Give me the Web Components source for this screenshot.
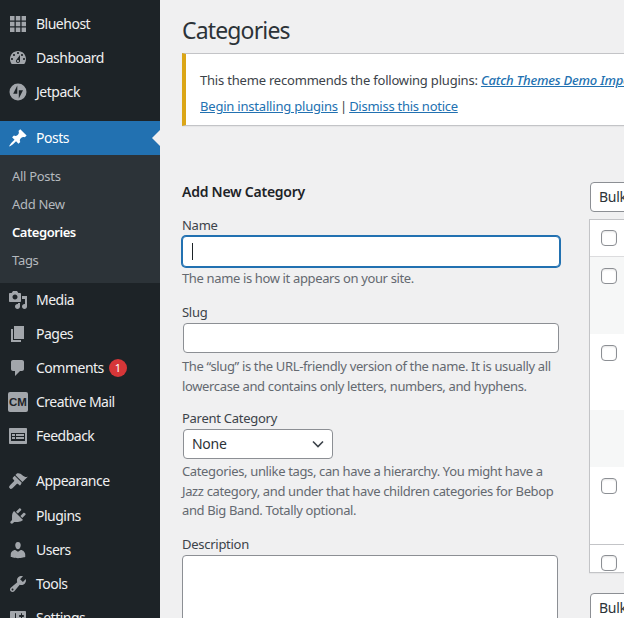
<!DOCTYPE html>
<html lang="en"><head><meta charset="utf-8"><title>Categories</title>
<style>
html,body{margin:0;padding:0;height:618px;overflow:hidden;background:#f0f0f1}
body{font:13px/1.4 "Noto Sans","Open Sans",sans-serif;color:#3c434a}
</style></head><body>
<wp-admin>
  <wp-sidebar slot="side">
    <wp-menu-item icon="bluehost">Bluehost</wp-menu-item>
    <wp-menu-item icon="dashboard">Dashboard</wp-menu-item>
    <wp-menu-item icon="jetpack">Jetpack</wp-menu-item>
    <wp-menu-item icon="post" current style="margin-top:12px">Posts</wp-menu-item>
    <wp-submenu>
      <wp-sub-item>All Posts</wp-sub-item>
      <wp-sub-item>Add New</wp-sub-item>
      <wp-sub-item current>Categories</wp-sub-item>
      <wp-sub-item>Tags</wp-sub-item>
    </wp-submenu>
    <wp-menu-item icon="media">Media</wp-menu-item>
    <wp-menu-item icon="page">Pages</wp-menu-item>
    <wp-menu-item icon="comments" badge="1">Comments</wp-menu-item>
    <wp-menu-item icon="cm">Creative Mail</wp-menu-item>
    <wp-menu-item icon="feedback">Feedback</wp-menu-item>
    <wp-menu-item icon="appearance" style="margin-top:11px">Appearance</wp-menu-item>
    <wp-menu-item icon="plugins" style="margin-top:1px">Plugins</wp-menu-item>
    <wp-menu-item icon="users">Users</wp-menu-item>
    <wp-menu-item icon="tools">Tools</wp-menu-item>
    <wp-menu-item icon="settings">Settings</wp-menu-item>
  </wp-sidebar>
  <wp-page slot="main" heading="Categories">
    <wp-notice>
      <span slot="line1">This theme recommends the following plugins: <a>Catch Themes Demo Import</a></span>
      <span slot="line2"><a class="x">Begin installing plugins</a><span class="sep"> | </span><a class="x d">Dismiss this notice</a></span>
    </wp-notice>
    <wp-columns>
      <wp-form slot="left"></wp-form>
      <wp-list slot="right"></wp-list>
    </wp-columns>
  </wp-page>
</wp-admin>
<script>
const ICONS={
 post:'<path d="M10.44 3.02l1.82-1.82 6.36 6.35-1.83 1.82c-1.05-.68-2.48-.57-3.41.36l-.75.75c-.92.93-1.04 2.35-.35 3.41l-1.83 1.82-2.41-2.41-2.8 2.79c-.42.42-3.38 2.71-3.8 2.29s1.86-3.39 2.28-3.81l2.79-2.79L4.1 9.36l1.83-1.82c1.05.69 2.48.57 3.4-.36l.75-.75c.93-.92 1.05-2.35.36-3.41z"/>',
 dashboard:'<path d="M3.76 16h12.48c1.1-1.37 1.76-3.11 1.76-5 0-4.42-3.58-8-8-8s-8 3.58-8 8c0 1.89.66 3.63 1.76 5zM10 4c.55 0 1 .45 1 1s-.45 1-1 1-1-.45-1-1 .45-1 1-1zM6 6c.55 0 1 .45 1 1s-.45 1-1 1-1-.45-1-1 .45-1 1-1zm8 0c.55 0 1 .45 1 1s-.45 1-1 1-1-.45-1-1 .45-1 1-1zm-5.37 5.55L12 7v6c0 1.1-.9 2-2 2s-2-.9-2-2c0-.57.24-1.08.63-1.45zM4 10c.55 0 1 .45 1 1s-.45 1-1 1-1-.45-1-1 .45-1 1-1zm12 0c.55 0 1 .45 1 1s-.45 1-1 1-1-.45-1-1 .45-1 1-1zm-5 3c0-.55-.45-1-1-1s-1 .45-1 1 .45 1 1 1 1-.45 1-1z" fill-rule="evenodd"/>',
 bluehost:'<path d="M2 2h4.5v4.5H2zM7.8 2h4.5v4.5H7.8zM13.6 2H18v4.5h-4.4zM2 7.8h4.5v4.5H2zM7.8 7.8h4.5v4.5H7.8zM13.6 7.8H18v4.5h-4.4zM2 13.6h4.5V18H2zM7.8 13.6h4.5V18H7.8zM13.6 13.6H18V18h-4.4z"/>',
 jetpack:'<path fill-rule="evenodd" d="M10 1.5a8.5 8.5 0 1 0 0 17 8.5 8.5 0 0 0 0-17zM9.3 3.5v8.3H5.2zM10.8 8.3h4.2l-4.2 8.2z"/>',
 media:'<path d="M13 11V4c0-.55-.45-1-1-1h-1.67L9 1H5L3.67 3H2c-.55 0-1 .45-1 1v7c0 .55.45 1 1 1h10c.55 0 1-.45 1-1zM7 4.5c1.38 0 2.5 1.12 2.5 2.5S8.38 9.5 7 9.5 4.5 8.38 4.5 7 5.62 4.5 7 4.5zM14 6h5v10.5c0 1.38-1.12 2.5-2.5 2.5S14 17.88 14 16.5s1.12-2.5 2.5-2.5c.17 0 .34.02.5.05V9h-3V6zm-4 8.05V13h2v3.5c0 1.38-1.12 2.5-2.5 2.5S7 17.88 7 16.5 8.12 14 9.5 14c.17 0 .34.02.5.05z" fill-rule="evenodd"/>',
 page:'<path d="M6 15V2h10v13H6zm-1 1h8v2H3V5h2v11z"/>',
 comments:'<path d="M5 2h9c1.1 0 2 .9 2 2v7c0 1.1-.9 2-2 2h-2l-5 5v-5H5c-1.1 0-2-.9-2-2V4c0-1.1.9-2 2-2z"/>',
 feedback:'<path fill-rule="evenodd" d="M2 2h16c.55 0 1 .45 1 1v14c0 .55-.45 1-1 1H2c-.55 0-1-.45-1-1V3c0-.55.45-1 1-1zM3 7v8h14V7zM4 8h3v2H4zM8 8h8v2H8zM4 11h3v2H4zM8 11h8v2H8z"/>',
 appearance:'<path d="M14.48 11.06L7.41 3.99l1.5-1.5c.5-.56 2.3-.47 3.51.32 1.21.8 1.43 1.28 2.91 2.1 1.18.64 2.45 1.26 4.45.85zm-.71.71L6.7 4.7 4.93 6.47c-.39.39-.39 1.02 0 1.41l1.06 1.06c.39.39.39 1.03 0 1.42l-3.5 3.5c-.8.8-1.9 2-1.2 2.9l1 1c.9.7 2.1-.4 2.9-1.2l3.5-3.5c.39-.39 1.03-.39 1.42 0l1.06 1.06c.39.39 1.02.39 1.41 0z"/>',
 plugins:'<path d="M13.11 4.36L9.87 7.6 8 5.73l3.24-3.24c.35-.34 1.05-.2 1.56.32.52.51.66 1.21.31 1.55zm-8 1.77l.91-1.12 9.01 9.01-1.19.84c-.71.71-2.63 1.16-3.82 1.16H6.14L4.9 17.26c-.59.59-1.54.59-2.12 0-.59-.58-.59-1.53 0-2.12l1.24-1.24v-3.88c0-1.13.4-3.19 1.09-3.89zm7.26 3.97l3.24-3.24c.34-.35 1.04-.21 1.55.31.52.51.66 1.21.31 1.55l-3.24 3.25z"/>',
 users:'<path d="M10 9.25c-2.27 0-2.73-3.44-2.73-3.44C7 4.02 7.82 2 9.97 2c2.16 0 2.98 2.02 2.71 3.81 0 0-.41 3.44-2.68 3.44zm0 2.57L12.72 10c2.39 0 4.52 2.33 4.52 4.53v2.49s-3.65 1.13-7.24 1.13c-3.65 0-7.24-1.13-7.24-1.13v-2.49c0-2.25 1.94-4.48 4.47-4.48z"/>',
 tools:'<path d="M16.68 9.77c-1.34 1.34-3.3 1.67-4.95.99l-5.41 6.52c-.99.99-2.59.99-3.58 0s-.99-2.59 0-3.57l6.52-5.42c-.68-1.65-.35-3.61.99-4.95 1.28-1.28 3.12-1.62 4.72-1.06l-2.89 2.89 2.82 2.82 2.86-2.87c.53 1.58.18 3.39-1.08 4.65zM3.81 16.21c.4.39 1.04.39 1.43 0 .4-.4.4-1.04 0-1.43-.39-.4-1.03-.4-1.43 0-.39.39-.39 1.03 0 1.43z" fill-rule="evenodd"/>',
 settings:'<path fill-rule="evenodd" d="M18 16V4c0-.55-.45-1-1-1H3c-.55 0-1 .45-1 1v12c0 .55.45 1 1 1h14c.55 0 1-.45 1-1zM8 11h1c.55 0 1 .45 1 1s-.45 1-1 1H8v1.5c0 .28-.22.5-.5.5s-.5-.22-.5-.5V13H6c-.55 0-1-.45-1-1s.45-1 1-1h1V5.5c0-.28.22-.5.5-.5s.5.22.5.5V11zm5-2h-1c-.55 0-1-.45-1-1s.45-1 1-1h1V5.5c0-.28.22-.5.5-.5s.5.22.5.5V7h1c.55 0 1 .45 1 1s-.45 1-1 1h-1v5.5c0 .28-.22.5-.5.5s-.5-.22-.5-.5V9z"/>'
};
function def(name,css,html,init){
  customElements.define(name,class extends HTMLElement{
    connectedCallback(){
      if(this.shadowRoot)return;
      const r=this.attachShadow({mode:'open'});
      r.innerHTML='<style>'+css+'</style>'+(typeof html==='function'?html(this):html);
    }
  });
}
def('wp-admin',':host{display:flex;width:624px;height:618px;overflow:hidden}','<slot name="side"></slot><slot name="main"></slot>');
def('wp-sidebar',':host{display:block;flex:none;width:160px;height:618px;overflow:hidden;background:#1d2327;padding-top:7px;box-sizing:border-box}','<slot></slot>');
def('wp-menu-item',`:host{display:flex;align-items:center;height:34px;color:#f0f0f1;font:14px/18px "Noto Sans",sans-serif;letter-spacing:-.5px;position:relative}
:host([current]){background:#2271b1;color:#fff}
.ic{flex:none;width:20px;height:20px;margin:0 8px;display:flex;align-items:center;justify-content:center;color:#a2a6ab}
:host([current]) .ic{color:#fff}
svg{width:20px;height:20px;fill:currentColor;display:block}
.cm{width:20px;height:20px;border-radius:2px;background:#a2a6ab;color:#1d2327;font:700 11.5px/20px "Liberation Sans",sans-serif;text-align:center;letter-spacing:0}
.badge{flex:none;margin-left:5px;width:18px;height:18px;border-radius:50%;background:#d63638;color:#fff;font:11px/18px "Noto Sans",sans-serif;text-align:center;letter-spacing:0}
.arrow{margin-left:auto;width:0;height:0;border:8px solid transparent;border-right-color:#f0f0f1;border-left:0}`,
 el=>{const i=el.getAttribute('icon');const b=el.getAttribute('badge');
  return `<span class="ic">${i==='cm'?'<span class="cm">CM</span>':`<svg viewBox="0 0 20 20">${ICONS[i]}</svg>`}</span><slot></slot>`+
  (b?`<span class="badge">${b}</span>`:'')+(el.hasAttribute('current')?'<span class="arrow"></span>':'');});
def('wp-submenu',':host{display:block;background:#2c3338;padding:7px 0 9px}','<slot></slot>');
def('wp-sub-item',`:host{display:block;height:28px;padding-left:12px;color:#b4b9be;font:13px/28px "Noto Sans",sans-serif;letter-spacing:-.3px}
:host([current]){color:#fff;font-weight:600;letter-spacing:-.45px}`,'<slot></slot>');
def('wp-page',`:host{display:block;flex:none;width:464px;padding-left:22px;overflow:hidden;height:618px}
h1{margin:0;height:53px;box-sizing:border-box;padding-top:14px;font:400 23px/32px "Noto Sans",sans-serif;letter-spacing:-.85px;color:#2c3338}`,
 el=>`<h1>${el.getAttribute('heading')}</h1><slot></slot>`);
def('wp-notice',`:host{display:block;box-sizing:border-box;width:720px;height:73px;background:#fff;border:1px solid #c3c4c7;border-left:4px solid #dba617;box-shadow:0 1px 1px rgba(0,0,0,.04);padding:17px 14px 0;color:#3c434a;font:13px/18px "Noto Sans",sans-serif;letter-spacing:-.2px}
.l{height:26px;white-space:nowrap}`,'<div class="l"><slot name="line1"></slot></div><div class="l"><slot name="line2"></slot></div>');
def('wp-columns',':host{display:flex;width:920px;margin-top:56px}','<slot name="left"></slot><slot name="right"></slot>');
def('wp-form',`:host{display:block;flex:none;width:378px;color:#3c434a;font:13px/19.5px "Noto Sans",sans-serif;letter-spacing:-.27px}
h2{margin:0;height:34px;font:600 14px/20px "Noto Sans",sans-serif;color:#1d2327;letter-spacing:-.25px}
label{display:block;height:20px;line-height:18px;color:#3c434a}
.i{display:block;box-sizing:border-box;background:#fff;border:1px solid #8c8f94;border-radius:4px}
.name{height:31px;width:378px;border-color:#2271b1;box-shadow:0 0 0 1px #2271b1;display:flex;align-items:center;padding-left:9px}
.caret{width:1px;height:17px;background:#1d2327}
.slug{height:30px;width:376px;margin-left:1px}
.sel{height:30px;width:150px;margin-left:1px;display:flex;align-items:center;justify-content:space-between;padding:0 7px 0 8px;color:#2c3338;font-size:14px}
.ta{height:100px;width:376px}
svg{width:14px;height:14px;display:block}
p{margin:0;color:#646970;white-space:nowrap;letter-spacing:-.36px}
.h1{padding-top:2px;height:33px}
.h2{padding-top:4px;height:52px}
.h3{padding-top:3px;height:73px}
`,`<h2>Add New Category</h2>
<label>Name</label><div class="i name"><span class="caret"></span></div>
<p class="h1">The name is how it appears on your site.</p>
<label style="margin-top:1px">Slug</label><div class="i slug"></div>
<p class="h2">The “slug” is the URL-friendly version of the name. It is usually all<br>lowercase and contains only letters, numbers, and hyphens.</p>
<label>Parent Category</label><div class="i sel"><span>None</span><svg viewBox="0 0 14 14"><path d="M2 4.5l5 5 5-5" fill="none" stroke="#3c434a" stroke-width="1.6"/></svg></div>
<p class="h3">Categories, unlike tags, can have a hierarchy. You might have a<br>Jazz category, and under that have children categories for Bebop<br>and Big Band. Totally optional.</p>
<label>Description</label><div class="i ta"></div>`);
def('wp-bulk',`:host{display:block;box-sizing:border-box;width:140px;height:30px;background:#fff;border:1px solid #8c8f94;border-radius:4px;padding-left:8px;color:#2c3338;font:14px/28px "Noto Sans",sans-serif;letter-spacing:-.3px;white-space:nowrap}`,'<slot></slot>');
def('wp-check',`:host{display:block;box-sizing:border-box;width:16px;height:16px;background:#fff;border:1px solid #8c8f94;border-radius:4px;box-shadow:inset 0 1px 2px rgba(0,0,0,.1)}`,'');
def('wp-row',`:host{display:block;box-sizing:border-box;background:#fff;padding:11px 0 0 11px}
:host([alt]){background:#f6f7f7}`,'<slot></slot>');
def('wp-list',`:host{display:block;flex:none;margin:0 0 0 29px;width:500px}
.t{margin-top:7px;box-sizing:border-box;border:1px solid #c3c4c7;background:#fff;width:500px;box-shadow:0 1px 1px rgba(0,0,0,.04)}
wp-row.h{height:37px;border-bottom:1px solid #dcdcde;padding-top:10px}
wp-row.f{height:28px;border-top:1px solid #c3c4c7;padding-top:10px}
.b2{margin-top:20px}
wp-bulk{margin-left:1px}`,
`<wp-bulk>Bulk actions</wp-bulk>
<div class="t">
<wp-row class="h"><wp-check></wp-check></wp-row>
<wp-row alt style="height:77px"><wp-check></wp-check></wp-row>
<wp-row style="height:76px"><wp-check></wp-check></wp-row>
<wp-row alt style="height:57px"></wp-row>
<wp-row style="height:77px"><wp-check></wp-check></wp-row>
<wp-row class="f"><wp-check></wp-check></wp-row>
</div>
<wp-bulk class="b2">Bulk actions</wp-bulk>`);
</script>
<style>
wp-notice a{color:#2271b1;text-decoration:underline;font-style:italic;font-weight:500}
wp-notice a.x{font-style:normal;font-weight:400}
wp-notice a.d{letter-spacing:-.26px}
wp-notice .sep{word-spacing:-1px}
</style>
</body></html>
